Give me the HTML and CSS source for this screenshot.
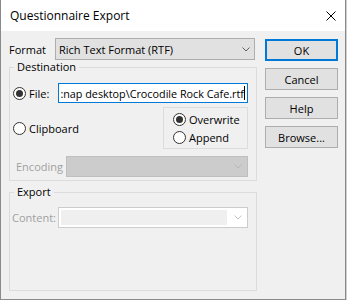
FILE: index.html
```html
<!DOCTYPE html>
<html lang="en">
<head>
    <meta charset="UTF-8">
    <title>Questionnaire Export</title>
    <link rel="stylesheet" href="styles.css">
</head>
<body>
    <div class="window">
        <!-- Title bar -->
        <div class="titlebar">
            <span class="title">Questionnaire Export</span>
            <svg class="close" width="10" height="10" viewBox="0 0 10 10">
                <path d="M0.5 0.5 L9.5 9.5 M9.5 0.5 L0.5 9.5" stroke="#000" stroke-width="1" fill="none"/>
            </svg>
        </div>

        <div class="dialog-body">
            <!-- Left column -->
            <div class="main">
                <div class="format-row">
                    <span class="label">Format</span>
                    <div class="combo format-combo">
                        <span class="combo-text">Rich Text Format (RTF)</span>
                        <svg class="chevron" width="8" height="5" viewBox="0 0 8 5">
                            <polyline points="0.5,0.5 4,4 7.5,0.5" stroke="#606060" fill="none"/>
                        </svg>
                    </div>
                </div>

                <fieldset class="group destination">
                    <legend>Destination</legend>
                    <div class="file-row">
                        <label class="radio-item"><span class="radio on"></span>File:</label>
                        <div class="textbox">
                            <span class="textbox-text">:nap desktop\Crocodile Rock Cafe.rtf</span>
                            <span class="caret"></span>
                        </div>
                    </div>
                    <div class="mode-row">
                        <label class="radio-item"><span class="radio"></span>Clipboard</label>
                        <div class="mode-box">
                            <label class="radio-item"><span class="radio on"></span>Overwrite</label>
                            <label class="radio-item"><span class="radio"></span>Append</label>
                        </div>
                    </div>
                    <div class="encoding-row">
                        <span class="label disabled">Encoding</span>
                        <div class="combo disabled-combo">
                            <svg class="chevron" width="8" height="5" viewBox="0 0 8 5">
                                <polyline points="0.5,0.5 4,4 7.5,0.5" stroke="#b8b8b8" fill="none"/>
                            </svg>
                        </div>
                    </div>
                </fieldset>

                <fieldset class="group export">
                    <legend>Export</legend>
                    <div class="content-row">
                        <span class="label disabled">Content:</span>
                        <div class="combo blank-combo">
                            <span class="blank-field"></span>
                            <svg class="chevron" width="8" height="5" viewBox="0 0 8 5">
                                <polyline points="0.5,0.5 4,4 7.5,0.5" stroke="#c4c4c4" fill="none"/>
                            </svg>
                        </div>
                    </div>
                </fieldset>
            </div>

            <!-- Right column buttons -->
            <div class="side">
                <button class="btn default">OK</button>
                <button class="btn">Cancel</button>
                <button class="btn">Help</button>
                <button class="btn">Browse...</button>
            </div>
        </div>
    </div>
</body>
</html>
```
FILE: styles.css
```css
/* General */
* {
    box-sizing: border-box;
}

html, body {
    margin: 0;
    background: #cfcfcf;
    font-family: "Open Sans", "Noto Sans", sans-serif;
    font-size: 11px;
    color: #000;
}

/* Window frame */
.window {
    width: 346px;
    height: 300px;
    display: flex;
    flex-direction: column;
    background: #f0f0f0;
    border: 1px solid #8a8a8a;
    border-top: none;
}

.titlebar {
    height: 31px;
    flex-shrink: 0;
    display: flex;
    align-items: center;
    justify-content: space-between;
    padding: 0 9px 0 9px;
    background: #fff;
    font-size: 12px;
}

.close {
    display: block;
}

/* Body */
.dialog-body {
    flex: 1;
    display: flex;
    gap: 8px;
    padding: 7px 0 0 8px;
}

.main {
    width: 248px;
    display: flex;
    flex-direction: column;
}

.label {
    white-space: nowrap;
}

.disabled {
    color: #a0a0a0;
}

/* Format row */
.format-row {
    height: 22px;
    display: flex;
    align-items: center;
}

.format-row .label {
    width: 46px;
}

.combo {
    display: flex;
    align-items: center;
    border: 1px solid #adadad;
    background: #e1e1e1;
}

.format-combo {
    width: 200px;
    height: 22px;
    padding: 0 4px 0 3px;
}

.combo-text {
    flex: 1;
    white-space: nowrap;
}

.chevron {
    display: block;
    margin-left: auto;
}

/* Group boxes */
.group {
    margin: 0;
    min-width: 0;
    border: 1px solid #dcdcdc;
    padding: 9px 8px 3px 3px;
}

.group legend {
    padding: 0 3px;
    margin-left: 1px;
    line-height: 14px;
    font-size: 11px;
}

/* Radios */
.radio-item {
    display: flex;
    align-items: center;
    gap: 3px;
    height: 13px;
    white-space: nowrap;
}

.radio {
    width: 13px;
    height: 13px;
    border: 1px solid #333;
    border-radius: 50%;
    background: #fff;
    display: flex;
    align-items: center;
    justify-content: center;
    flex-shrink: 0;
}

.radio.on::after {
    content: "";
    width: 7px;
    height: 7px;
    border-radius: 50%;
    background: #333;
}

/* File row */
.file-row {
    height: 20px;
    display: flex;
    align-items: center;
}

.textbox {
    width: 190px;
    height: 20px;
    margin-left: auto;
    display: flex;
    align-items: center;
    justify-content: flex-end;
    overflow: hidden;
    border: 1px solid #0078d7;
    background: #fff;
    padding: 0 2px 0 2px;
    font-size: 10.8px;
}

.textbox-text {
    white-space: nowrap;
}

.caret {
    flex-shrink: 0;
    width: 1px;
    height: 14px;
    background: #000;
}

/* Clipboard + overwrite/append */
.mode-row {
    height: 42px;
    margin-top: 4px;
    display: flex;
    align-items: center;
}

.mode-box {
    width: 85px;
    height: 42px;
    margin-left: auto;
    display: flex;
    flex-direction: column;
    gap: 5px;
    padding: 5px 0 4px 9px;
    border: 1px solid #dcdcdc;
}

/* Encoding row */
.encoding-row {
    height: 21px;
    margin-top: 7px;
    display: flex;
    align-items: center;
}

.encoding-row .label {
    margin-left: 3px;
}

.disabled-combo {
    width: 182px;
    height: 21px;
    margin-left: auto;
    padding-right: 5px;
    background: #cccccc;
    border-color: #bfbfbf;
}

/* Export group */
.export {
    height: 106px;
    margin-top: 4px;
    padding-top: 8px;
}

.content-row {
    height: 21px;
    display: flex;
    align-items: center;
}

.content-row .label {
    margin-left: -1px;
}

.blank-combo {
    width: 190px;
    height: 21px;
    margin-left: auto;
    padding: 2px 5px 2px 2px;
    background: #fff;
    border-color: #cccccc;
}

.blank-field {
    width: 166px;
    height: 100%;
    background: #efefef;
}

/* Buttons */
.side {
    width: 73px;
    display: flex;
    flex-direction: column;
    gap: 7px;
    padding-top: 1px;
}

.btn {
    height: 22px;
    padding: 0;
    font-family: inherit;
    font-size: 11px;
    color: #000;
    background: #e1e1e1;
    border: 1px solid #adadad;
}

.btn.default {
    border: 2px solid #0078d7;
}
```
